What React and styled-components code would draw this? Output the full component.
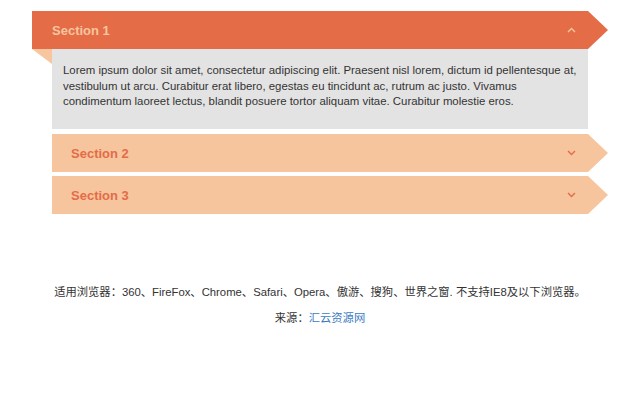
import React, { useState } from "react";
import styled, { createGlobalStyle } from "styled-components";

const Global = createGlobalStyle`
  html, body { margin: 0; padding: 0; background: #fff; }
  body { font-family: "Liberation Sans", Arial, "Noto Sans CJK SC", sans-serif; }
`;

const ORANGE = "#e46c47";
const PEACH = "#f6c59e";

const Page = styled.div`
  padding-top: 11px;
`;

const Accordion = styled.div`
  width: 536px;
  margin-left: 52px;
  display: flex;
  flex-direction: column;
  gap: 4px;
`;

const Item = styled.div`
  display: flex;
  flex-direction: column;
  margin-bottom: ${(p) => (p.$open ? "1px" : "0")};
`;

const Header = styled.button`
  position: relative;
  display: flex;
  align-items: center;
  justify-content: space-between;
  box-sizing: border-box;
  height: 38px;
  border: 0;
  cursor: pointer;
  text-align: left;
  font-family: "Liberation Sans", Arial, sans-serif;
  font-size: 13px;
  font-weight: bold;
  background: ${(p) => (p.$open ? ORANGE : PEACH)};
  color: ${(p) => (p.$open ? PEACH : ORANGE)};
  margin-left: ${(p) => (p.$open ? "-20px" : "0")};
  width: ${(p) => (p.$open ? "556px" : "536px")};
  padding: 0 12px 0 ${(p) => (p.$open ? "20px" : "19px")};

  /* pointed tip on the right */
  &::after {
    content: "";
    position: absolute;
    top: 0;
    right: -20px;
    border-left: 20px solid ${(p) => (p.$open ? ORANGE : PEACH)};
    border-top: 19px solid transparent;
    border-bottom: 19px solid transparent;
  }

  /* folded corner under the open tab */
  &::before {
    content: "";
    display: ${(p) => (p.$open ? "block" : "none")};
    position: absolute;
    left: 0;
    bottom: -15px;
    border-top: 15px solid #f7c6a1;
    border-left: 20px solid transparent;
  }
`;

const Chevron = styled.svg`
  width: 9px;
  height: 6px;
`;

const Panel = styled.div`
  box-sizing: border-box;
  background: #e3e3e3;
  color: #333;
  font-size: 11.4px;
  line-height: 15.5px;
  padding: 14px 10px 20px 11px;
  height: 80px;
`;

const Footer = styled.div`
  margin-top: 65px;
  text-align: center;
  font-family: "Liberation Sans", Arial, "Noto Sans CJK SC", sans-serif;
  font-size: 11.3px;
  color: #333;
  line-height: 26px;
`;

const Link = styled.a`
  color: #3b7bc4;
  text-decoration: none;
`;

const sections = [
  {
    title: "Section 1",
    body:
      "Lorem ipsum dolor sit amet, consectetur adipiscing elit. Praesent nisl lorem, dictum id pellentesque at, vestibulum ut arcu. Curabitur erat libero, egestas eu tincidunt ac, rutrum ac justo. Vivamus condimentum laoreet lectus, blandit posuere tortor aliquam vitae. Curabitur molestie eros.",
  },
  { title: "Section 2", body: "Nulla facilisi. Donec sed lectus ut justo fermentum posuere." },
  { title: "Section 3", body: "Aenean vel metus at orci luctus tincidunt vitae sed nunc." },
];

export default function App() {
  const [open, setOpen] = useState(0);
  return (
    <Page>
      <Global />
      <Accordion>
        {sections.map((s, i) => {
          const isOpen = open === i;
          return (
            <Item key={s.title} $open={isOpen}>
              <Header $open={isOpen} onClick={() => setOpen(isOpen ? -1 : i)}>
                {s.title}
                <Chevron viewBox="0 0 9 6">
                  <path
                    d={isOpen ? "M1 5 L4.5 1.5 L8 5" : "M1 1 L4.5 4.5 L8 1"}
                    fill="none"
                    stroke="currentColor"
                    strokeWidth="1.4"
                  />
                </Chevron>
              </Header>
              {isOpen && <Panel>{s.body}</Panel>}
            </Item>
          );
        })}
      </Accordion>
      <Footer>
        <div>适用浏览器：360、FireFox、Chrome、Safari、Opera、傲游、搜狗、世界之窗. 不支持IE8及以下浏览器。</div>
        <div>
          来源：<Link href="#">汇云资源网</Link>
        </div>
      </Footer>
    </Page>
  );
}
